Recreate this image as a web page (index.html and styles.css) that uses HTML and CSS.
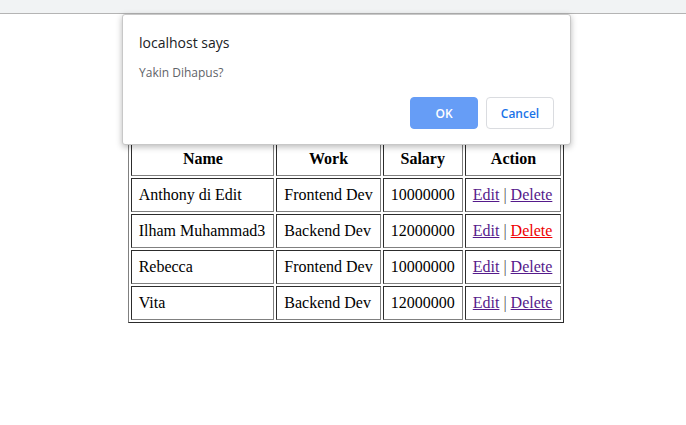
FILE: index.html
```html
<!DOCTYPE html>
<html>
<head>
<meta charset="utf-8">
<title>Data Pegawai</title>
<link rel="stylesheet" href="styles.css">
</head>
<body>
<div class="topbar"></div>
<main class="page">
  <table class="data">
    <thead>
      <tr><th class="c-name">Name</th><th>Work</th><th>Salary</th><th class="c-act">Action</th></tr>
    </thead>
    <tbody>
      <tr><td class="c-name">Anthony di Edit</td><td>Frontend Dev</td><td>10000000</td><td class="c-act"><a class="lnk" href="#">Edit</a> <span class="sep">|</span> <a class="lnk" href="#">Delete</a></td></tr>
      <tr><td class="c-name">Ilham Muhammad3</td><td>Backend Dev</td><td>12000000</td><td class="c-act"><a class="lnk" href="#">Edit</a> <span class="sep">|</span> <a class="lnk active" href="#">Delete</a></td></tr>
      <tr><td class="c-name">Rebecca</td><td>Frontend Dev</td><td>10000000</td><td class="c-act"><a class="lnk" href="#">Edit</a> <span class="sep">|</span> <a class="lnk" href="#">Delete</a></td></tr>
      <tr><td class="c-name">Vita</td><td>Backend Dev</td><td>12000000</td><td class="c-act"><a class="lnk" href="#">Edit</a> <span class="sep">|</span> <a class="lnk" href="#">Delete</a></td></tr>
    </tbody>
  </table>
</main>
<div class="dialog">
  <div class="dlg-title">localhost says</div>
  <div class="dlg-msg">Yakin Dihapus?</div>
  <div class="dlg-actions">
    <button class="btn btn-ok">OK</button>
    <button class="btn btn-cancel">Cancel</button>
  </div>
</div>
</body>
</html>
```

FILE: styles.css
```css
html, body {
  margin: 0;
  padding: 0;
  background: #ffffff;
}
body {
  font-family: "Liberation Serif", "Times New Roman", serif;
  font-size: 16px;
  color: #000;
}
.topbar {
  height: 13px;
  background: #f1f3f4;
  border-bottom: 1px solid #b4b4b4;
}
.page {
  padding: 125px 8px 8px 14px;
}
.data {
  margin: 0 auto;
  border: 1px outset #808080;
  border-spacing: 2px;
  border-collapse: separate;
}
.data th, .data td {
  border: 1px inset #808080;
  padding: 7px;
  line-height: 18px;
  text-align: left;
  white-space: nowrap;
}
.data th {
  font-weight: bold;
  text-align: center;
}
.data .c-name, .data .c-act {
  padding-right: 8px;
}
.data th.c-name, .data th.c-act {
  padding-left: 8px;
  padding-right: 7px;
}
.lnk {
  color: #551a8b;
  text-decoration: underline;
}
.lnk.active {
  color: #ee0000;
}
.sep {
  color: #555;
}
.dialog {
  position: absolute;
  left: 122px;
  top: 14px;
  width: 447px;
  height: 129px;
  background: #fff;
  border: 1px solid #c8c8c8;
  border-radius: 3px;
  box-shadow: 0 2px 6px rgba(0, 0, 0, 0.28);
  font-family: "Open Sans", "Noto Sans", sans-serif;
  box-sizing: content-box;
}
.dlg-title {
  margin: 18px 0 0 16px;
  font-size: 14px;
  color: #202124;
  line-height: 20px;
}
.dlg-msg {
  margin: 11px 0 0 16px;
  font-size: 12px;
  color: #5f6368;
  line-height: 18px;
}
.dlg-actions {
  display: flex;
  justify-content: flex-end;
  gap: 8px;
  margin: 15px 16px 0 0;
}
.btn {
  height: 32px;
  width: 68px;
  border-radius: 4px;
  font-family: "Open Sans", "Noto Sans", sans-serif;
  font-size: 12px;
  font-weight: 600;
  cursor: pointer;
}
.btn-ok {
  background: #669df6;
  color: #fff;
  border: 1px solid #669df6;
}
.btn-cancel {
  background: #fff;
  color: #1a73e8;
  border: 1px solid #dadce0;
}
```
